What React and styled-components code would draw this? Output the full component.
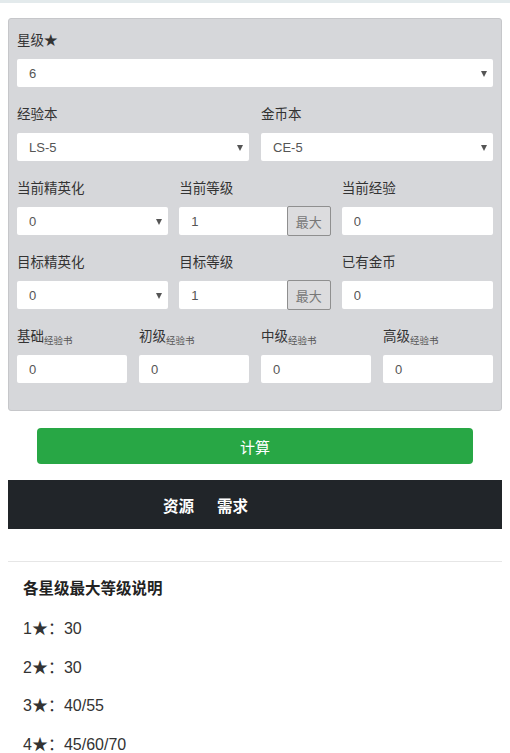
import React from 'react';
import styled, { createGlobalStyle } from 'styled-components';

const GlobalStyle = createGlobalStyle`
  body {
    margin: 0;
    background: #fff;
    font-family: "Liberation Sans", "Noto Sans CJK SC", sans-serif;
    color: #333;
  }
`;

const TopBar = styled.div`
  height: 3px;
  background: #e3eaec;
`;

const Wrapper = styled.div`
  padding: 0 8px;
`;

const Panel = styled.div`
  margin-top: 15px;
  background: #d6d7da;
  border: 1px solid #c6c7ca;
  border-radius: 3px;
  padding: 12px 8px 27px;
  display: flex;
  flex-direction: column;
  gap: 18px;
`;

const Row = styled.div`
  display: grid;
  grid-template-columns: repeat(${(p) => p.cols}, 1fr);
  column-gap: ${(p) => (p.cols === 3 ? 11 : 12)}px;
`;

const Field = styled.div`
  display: flex;
  flex-direction: column;
  gap: 8px;
`;

const Label = styled.label`
  font-size: 13.5px;
  line-height: 20px;
  height: 20px;
  color: #333;
  white-space: nowrap;
`;

const Sub = styled.span`
  font-size: 9.5px;
  color: #555;
  vertical-align: -3px;
`;

const SelectBox = styled.div`
  position: relative;
  height: 28px;

  &::after {
    content: '';
    position: absolute;
    right: 6px;
    top: 12px;
    border-left: 3px solid transparent;
    border-right: 3px solid transparent;
    border-top: 6px solid #555;
    pointer-events: none;
  }
`;

const Select = styled.select`
  appearance: none;
  width: 100%;
  height: 28px;
  box-sizing: border-box;
  border: none;
  border-radius: 2px;
  background: #fff;
  padding: 0 12px;
  font-family: inherit;
  font-size: 13px;
  color: #555;
  outline: none;
`;

const Input = styled.input`
  width: 100%;
  min-width: 0;
  height: 28px;
  box-sizing: border-box;
  border: none;
  border-radius: 2px;
  background: #fff;
  padding: 0 12px;
  font-family: inherit;
  font-size: 13px;
  color: #555;
  outline: none;
`;

const InputGroup = styled.div`
  display: flex;
  height: 28px;

  ${Input} {
    border-radius: 2px 0 0 2px;
  }
`;

const MaxButton = styled.button`
  flex: 0 0 44px;
  height: 30px;
  margin-top: -1px;
  box-sizing: border-box;
  border: 1px solid #8f8f8f;
  border-radius: 2px;
  background: #dcdcde;
  color: #777;
  font-family: inherit;
  font-size: 13px;
  padding: 0;
`;

const CalcButton = styled.button`
  display: block;
  width: calc(100% - 58px);
  margin: 17px auto 0;
  height: 36px;
  border: none;
  border-radius: 4px;
  background: #28a745;
  color: #fff;
  font-family: inherit;
  font-size: 15px;
`;

const NavBar = styled.div`
  margin-top: 16px;
  height: 49px;
  background: #212529;
  display: flex;
  align-items: center;
  padding-left: 155px;
  gap: 23px;
`;

const NavItem = styled.span`
  color: #fff;
  font-weight: bold;
  font-size: 15.5px;
`;

const Divider = styled.hr`
  margin: 32px 0 0;
  border: none;
  border-top: 1px solid #e6e6e6;
`;

const Notes = styled.div`
  padding: 16px 15px 0;
`;

const NotesTitle = styled.h4`
  margin: 0 0 18px;
  font-size: 15.5px;
  line-height: 22px;
  font-weight: bold;
  color: #222;
`;

const NoteLine = styled.p`
  margin: 0 0 16.5px;
  font-size: 16px;
  line-height: 22px;
  color: #333;
`;

const Dropdown = ({ value }) => (
  <SelectBox>
    <Select defaultValue={value}>
      <option value={value}>{value}</option>
    </Select>
  </SelectBox>
);

const LevelInput = () => (
  <InputGroup>
    <Input defaultValue="1" />
    <MaxButton>最大</MaxButton>
  </InputGroup>
);

const books = ['基础', '初级', '中级', '高级'];
const levelNotes = [
  ['1', '30'],
  ['2', '30'],
  ['3', '40/55'],
  ['4', '45/60/70'],
];

export default function App() {
  return (
    <>
      <GlobalStyle />
      <TopBar />
      <Wrapper>
        <Panel>
          <Row cols={1}>
            <Field>
              <Label>星级★</Label>
              <Dropdown value="6" />
            </Field>
          </Row>
          <Row cols={2}>
            <Field>
              <Label>经验本</Label>
              <Dropdown value="LS-5" />
            </Field>
            <Field>
              <Label>金币本</Label>
              <Dropdown value="CE-5" />
            </Field>
          </Row>
          <Row cols={3}>
            <Field>
              <Label>当前精英化</Label>
              <Dropdown value="0" />
            </Field>
            <Field>
              <Label>当前等级</Label>
              <LevelInput />
            </Field>
            <Field>
              <Label>当前经验</Label>
              <Input defaultValue="0" />
            </Field>
          </Row>
          <Row cols={3}>
            <Field>
              <Label>目标精英化</Label>
              <Dropdown value="0" />
            </Field>
            <Field>
              <Label>目标等级</Label>
              <LevelInput />
            </Field>
            <Field>
              <Label>已有金币</Label>
              <Input defaultValue="0" />
            </Field>
          </Row>
          <Row cols={4}>
            {books.map((b) => (
              <Field key={b}>
                <Label>
                  {b}
                  <Sub>经验书</Sub>
                </Label>
                <Input defaultValue="0" />
              </Field>
            ))}
          </Row>
        </Panel>
        <CalcButton>计算</CalcButton>
        <NavBar>
          <NavItem>资源</NavItem>
          <NavItem>需求</NavItem>
        </NavBar>
        <Divider />
        <Notes>
          <NotesTitle>各星级最大等级说明</NotesTitle>
          {levelNotes.map(([star, max]) => (
            <NoteLine key={star}>
              {star}★：{max}
            </NoteLine>
          ))}
        </Notes>
      </Wrapper>
    </>
  );
}
